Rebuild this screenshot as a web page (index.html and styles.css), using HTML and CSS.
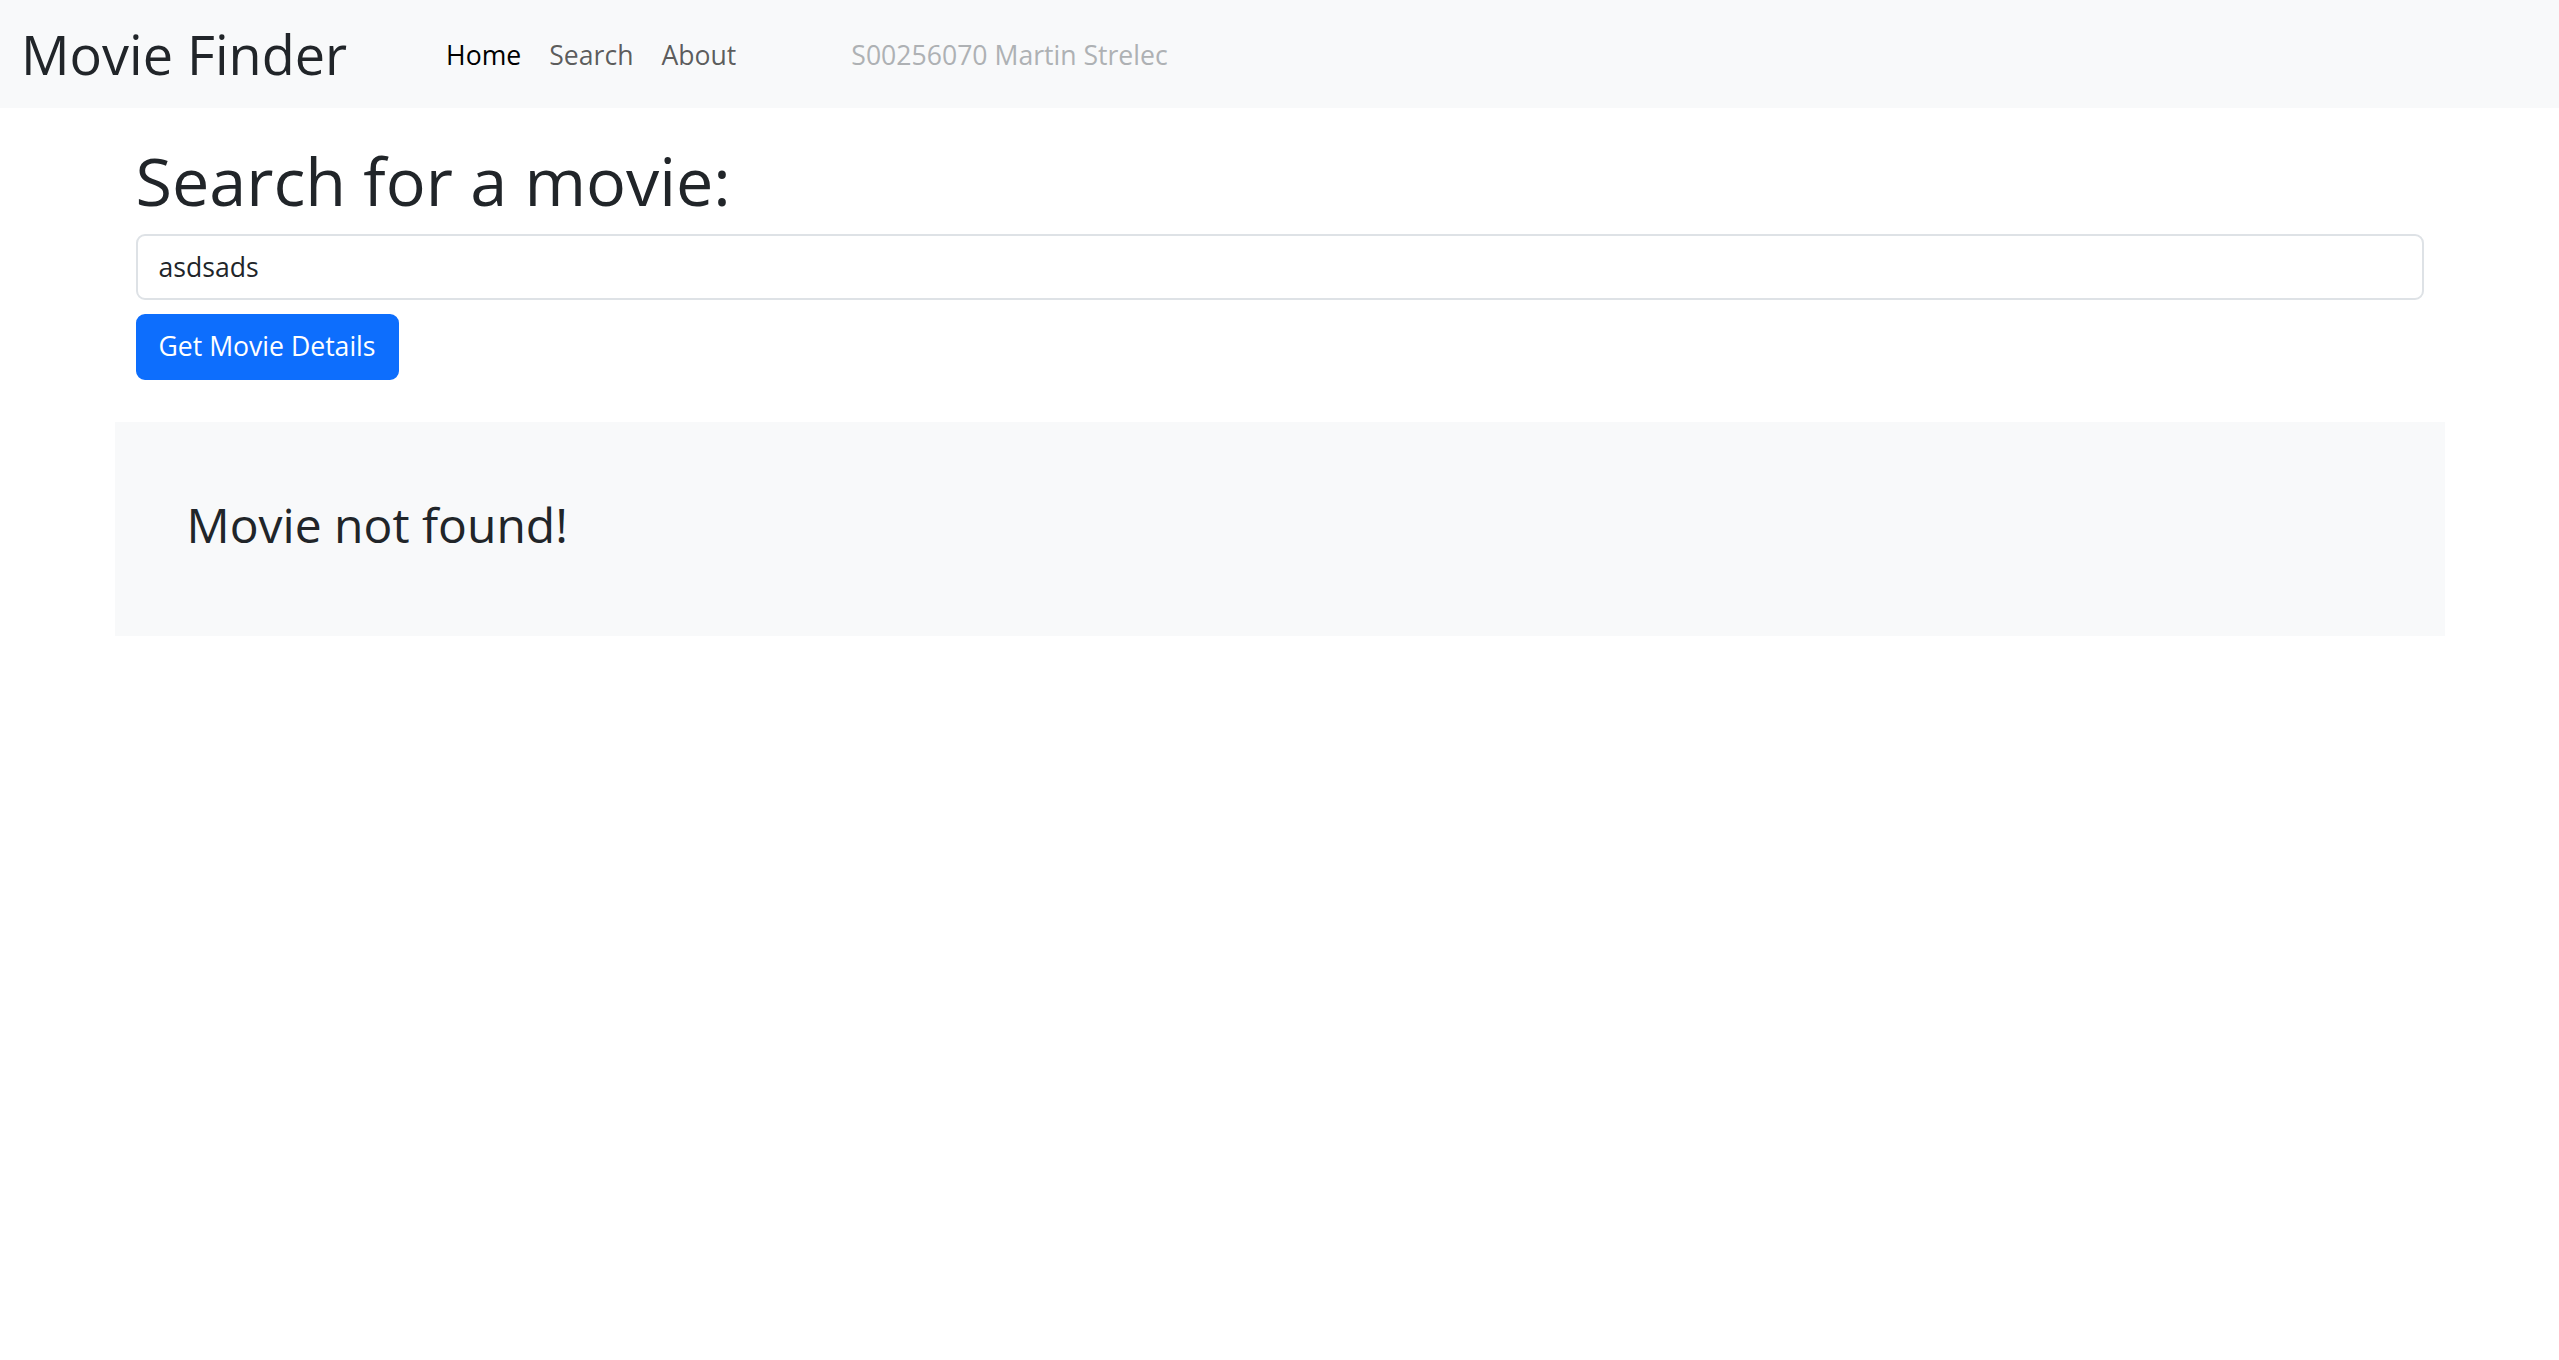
FILE: index.html
```html
<!DOCTYPE html>
<html lang="en">
<head>
<meta charset="utf-8">
<title>Movie Finder</title>
<link rel="stylesheet" href="styles.css">
</head>
<body>
<nav class="navbar">
  <a class="brand" href="#">Movie Finder</a>
  <ul class="nav-links">
    <li><a class="nav-link active" href="#">Home</a></li>
    <li><a class="nav-link" href="#">Search</a></li>
    <li><a class="nav-link" href="#">About</a></li>
  </ul>
  <span class="student">S00256070 Martin Strelec</span>
</nav>
<main class="container">
  <section class="search">
    <h1 class="title">Search for a movie:</h1>
    <input class="field" type="text" value="asdsads">
    <button class="btn-primary" type="button">Get Movie Details</button>
  </section>
  <section class="result">
    <h2 class="result-text">Movie not found!</h2>
  </section>
</main>
</body>
</html>
```

FILE: styles.css
```css
* { box-sizing: border-box; }
html, body { margin: 0; padding: 0; }
body {
  font-family: "Segoe UI", "Open Sans", "Noto Sans", sans-serif;
  color: #212529;
  background: #ffffff;
  font-size: 26.6px;
  line-height: 1.5;
}
.navbar {
  display: flex;
  align-items: center;
  height: 108px;
  padding: 0 21px;
  background: #f8f9fa;
}
.brand {
  font-size: 54px;
  line-height: 1.2;
  color: #212529;
  text-decoration: none;
  margin-right: 85px;
}
.nav-links {
  display: flex;
  list-style: none;
  margin: 0;
  padding: 0;
}
.nav-link {
  display: block;
  padding: 9px 14px 5px;
  color: rgba(0, 0, 0, 0.65);
  text-decoration: none;
  font-size: 26.6px;
}
.nav-link.active { color: #000; }
.student {
  margin-left: 101px;
  padding-top: 4px;
  color: #aeb1b4;
  font-size: 26.6px;
}
.container {
  width: 2330px;
  margin: 0 auto;
}
.search {
  padding: 33px 21px 0;
  display: flex;
  flex-direction: column;
  align-items: flex-start;
}
.title {
  font-size: 66.5px;
  font-weight: 400;
  line-height: 1.2;
  margin: 0 0 13px;
}
.field {
  width: 100%;
  height: 66px;
  padding: 0 21px;
  font: inherit;
  font-size: 26.6px;
  color: #212529;
  background: #fff;
  border: 2px solid #dee2e6;
  border-radius: 9px;
  outline: none;
}
.btn-primary {
  margin-top: 14px;
  height: 66px;
  padding: 0 21px;
  font: inherit;
  font-size: 26.6px;
  color: #fff;
  background: #0d6efd;
  border: 2px solid #0d6efd;
  border-radius: 9px;
}
.result {
  margin-top: 42px;
  height: 214px;
  background: #f8f9fa;
  padding: 74px 72px 0;
}
.result-text {
  margin: 0;
  font-size: 48px;
  font-weight: 400;
  line-height: 1.2;
}
```
